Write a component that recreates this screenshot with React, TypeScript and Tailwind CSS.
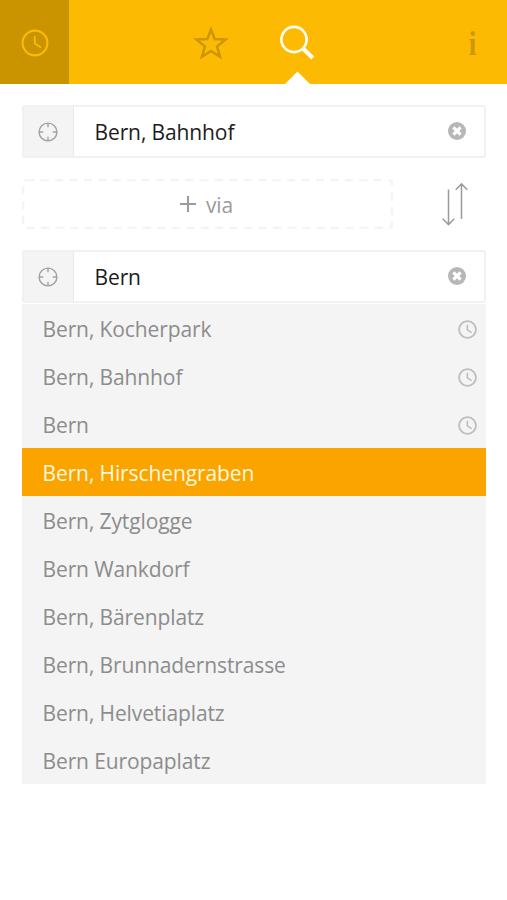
import React from "react";

const stops = [
  { name: "Bern, Kocherpark", recent: true },
  { name: "Bern, Bahnhof", recent: true },
  { name: "Bern", recent: true },
  { name: "Bern, Hirschengraben", active: true },
  { name: "Bern, Zytglogge" },
  { name: "Bern Wankdorf" },
  { name: "Bern, Bärenplatz" },
  { name: "Bern, Brunnadernstrasse" },
  { name: "Bern, Helvetiaplatz" },
  { name: "Bern Europaplatz" },
];

function Clock({ className, width }: { className: string; width: number }) {
  return (
    <svg viewBox="0 0 28 28" fill="none" stroke="currentColor" strokeWidth={width} className={className}>
      <circle cx="14" cy="14" r="12.4" />
      <path d="M13.8 7v7.6l6.2 4" strokeWidth={width * 0.85} />
    </svg>
  );
}

function Target() {
  return (
    <svg viewBox="0 0 20 20" fill="none" stroke="#a0a0a0" strokeWidth="1.4" className="h-5 w-5">
      <circle cx="10" cy="10" r="8.9" />
      <path d="M10 1v4.2M10 14.8V19M1 10h4.2M14.8 10H19" />
    </svg>
  );
}

function Field({ value }: { value: string }) {
  return (
    <div className="flex h-[53px] rounded-[3px] border-2 border-[#f1f1f1] bg-white">
      <div className="flex w-[50px] items-center justify-center border-r border-[#e9e9e9] bg-[#f4f4f4] pr-[2px]">
        <Target />
      </div>
      <div className="flex flex-1 items-center justify-between pr-[18.5px] pl-[20.5px]">
        <span className="text-[21px] leading-7 text-[#1c1c1c]">{value}</span>
        <svg viewBox="0 0 18 18" className="mb-px h-[18px] w-[18px]">
          <circle cx="9" cy="9" r="9" fill="#b7b7b7" />
          <path d="M5.4 5.4l7.2 7.2M12.6 5.4l-7.2 7.2" stroke="#fff" strokeWidth="3.2" />
        </svg>
      </div>
    </div>
  );
}

export default function App() {
  return (
    <div className="h-[900px] w-[507px] overflow-hidden bg-white font-['Open_Sans',sans-serif] tracking-[-0.11px]">
      <header className="relative flex h-[84px] items-center bg-[#fdba03]">
        <div className="flex h-full w-[69px] items-center justify-center bg-[#c99400] pt-[2px] text-[#fdba03]">
          <Clock className="h-7 w-7" width={2.1} />
        </div>
        <svg viewBox="0 0 36 36" className="mt-[2px] ml-[124px] h-9 w-9" fill="none" stroke="#cb9600" strokeWidth="2.5">
          <path d="M18 4.4l3.7 9.7 10.8.5-8.4 6.8 2.9 10.3-9-5.8-9 5.8 2.9-10.3-8.4-6.8 10.8-.5z" />
        </svg>
        <svg viewBox="0 0 36 36" className="mt-[2px] ml-[50px] h-9 w-9" fill="none" stroke="#fffdf4">
          <circle cx="15" cy="14.5" r="12.6" strokeWidth="2.7" />
          <path d="M24 23.5l9.8 9.5" strokeWidth="4.2" />
        </svg>
        <span className="mt-[4px] ml-[153px] w-[8px] origin-center scale-x-80 font-['Liberation_Serif',serif] text-[34px] leading-9 font-bold text-[#cb9808]">i</span>
        <svg viewBox="0 0 26 13" className="absolute bottom-0 left-[285px] h-[13px] w-[26px]">
          <path d="M0 13L12.5 0.5 25 13z" fill="#fff" />
        </svg>
      </header>

      <main className="pt-[21px] pr-[21px] pl-[22px]">
        <Field value="Bern, Bahnhof" />
        <div className="mt-[21px] mb-[21px] flex h-[50px] items-center">
          <div className="relative flex h-[50px] w-[371px] items-center justify-center gap-[9px] pr-[3px] text-[#9b9b9b]">
            <svg className="absolute inset-0 h-full w-full" fill="none">
              <rect x="1" y="1" width="369" height="48" rx="3" stroke="#f4f4f4" strokeWidth="2.5" strokeDasharray="8 6.5" />
            </svg>
            <svg viewBox="0 0 18 18" className="h-[18px] w-[18px]" stroke="currentColor" strokeWidth="2">
              <path d="M9 1v16M1 9h16" />
            </svg>
            <span className="pt-[2px] text-[21px] leading-7">via</span>
          </div>
          <svg viewBox="0 0 26 44" className="mb-px ml-[49px] h-[44px] w-[26px]" fill="none" stroke="#9b9b9b" strokeWidth="1.5">
            <path d="M6.5 7.5v35M.7 36.8l5.8 5.8 5.8-5.8M19.5 37V2M13.7 7.7l5.8-5.8 5.8 5.8" />
          </svg>
        </div>
        <Field value="Bern" />
        <ul className="mt-px bg-[#f4f4f4]">
          {stops.map((s) => (
            <li
              key={s.name}
              className={
                "flex h-12 items-center justify-between pt-[2px] pr-[9.5px] pl-[20.5px] text-[21px] leading-7 " +
                (s.active ? "bg-[#fba400] text-[#fff8dc]" : "text-[#8c8c8c]")
              }
            >
              <span>{s.name}</span>
              {s.recent && <Clock className="h-[19px] w-[19px] text-[#bdbdbd]" width={2.7} />}
            </li>
          ))}
        </ul>
      </main>
    </div>
  );
}
